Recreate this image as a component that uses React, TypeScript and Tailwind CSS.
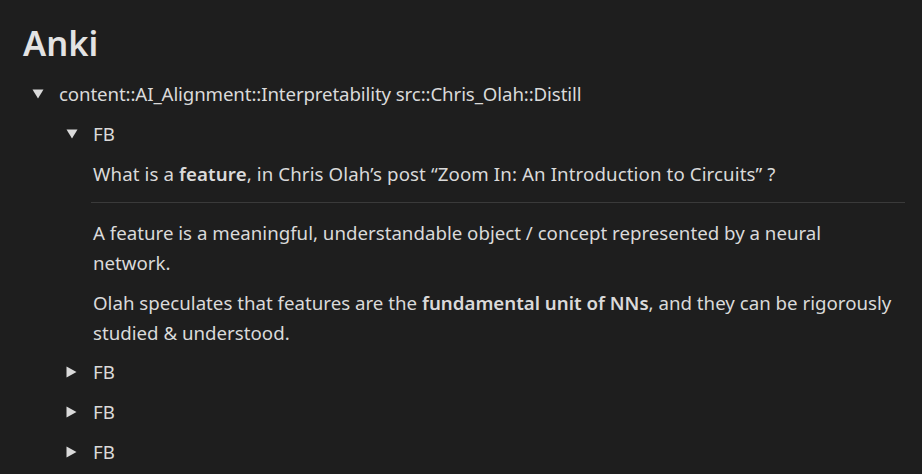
import React from 'react';

const Down = () => (
  <svg width="12" height="10" viewBox="0 0 12 10" className="fill-[#dadada]">
    <path d="M0.5 0.5 L11.5 0.5 L6 9.5 Z" />
  </svg>
);

const Right = () => (
  <svg width="11" height="12" viewBox="0 0 11 12" className="fill-[#dadada]">
    <path d="M0.5 0.5 L10.5 6 L0.5 11.5 Z" />
  </svg>
);

const Collapsed = ({ label }: { label: string }) => (
  <div className="flex h-10 items-center">
    <span className="flex w-[27px] justify-start">
      <Right />
    </span>
    <span>{label}</span>
  </div>
);

export default function App() {
  return (
    <div className="min-h-[474px] w-full overflow-hidden bg-[#1e1e1e] font-['Noto_Sans','Open_Sans',sans-serif] text-[18.7px] text-[#dadada]">
      <h1 className="pl-[23px] pt-[23px] text-[34.5px] font-semibold leading-[40px] text-[#e3e3e3]">Anki</h1>
      <div className="pl-[32px] pt-[11px]">
        <div className="flex h-10 items-center">
          <span className="flex w-[27px]">
            <Down />
          </span>
          <span className="tracking-[-0.12px]">content::AI_Alignment::Interpretability src::Chris_Olah::Distill</span>
        </div>
        <div className="pl-[34px]">
          <div className="flex h-10 items-center">
            <span className="flex w-[27px]">
              <Down />
            </span>
            <span>FB</span>
          </div>
          <div className="pl-[27px] pr-[17px]">
            <div className="flex h-10 items-center">
              <span className="tracking-[0.1px]">
                What is a <b className="font-semibold">feature</b>, in Chris Olah’s post “Zoom In: An Introduction to Circuits” ?
              </span>
            </div>
            <hr className="ml-[-2px] mt-2 border-t border-[#3a3a3a]" />
            <p className="mt-[15px] leading-[30px]">
              A feature is a meaningful, understandable object / concept represented by a neural
              <br />
              network.
            </p>
            <p className="mt-[10px] leading-[30px]">
              Olah speculates that features are the <b className="font-semibold">fundamental unit of NNs</b>, and they can be rigorously
              <br />
              studied &amp; understood.
            </p>
          </div>
          <div className="mt-1">
            <Collapsed label="FB" />
            <Collapsed label="FB" />
            <Collapsed label="FB" />
          </div>
        </div>
      </div>
    </div>
  );
}
